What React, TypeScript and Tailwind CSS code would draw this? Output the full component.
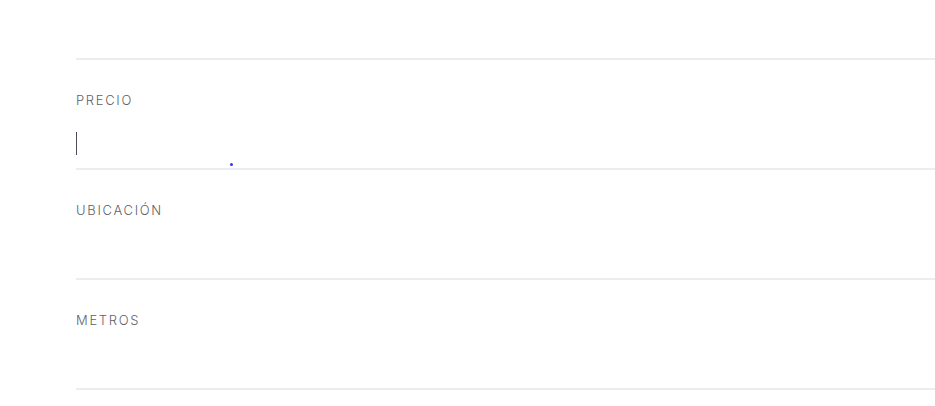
import React from "react";

const FIELDS = ["PRECIO", "UBICACIÓN", "METROS"];

export default function App() {
  return (
    <div
      className="min-h-[406px] w-full bg-white pl-[76px] pt-[58px]"
      style={{ fontFamily: "Inter, 'Noto Sans', sans-serif" }}
    >
      {FIELDS.map((label, i) => (
        <div
          key={label}
          className="relative h-[110px] border-t-2 border-[#ececf1] pt-[32px]"
        >
          <div className="text-[13px] font-light leading-4 tracking-[0.13em] text-[#5f5f6a]">
            {label}
          </div>
          {i === 0 ? (
            <>
              <div className="mt-[24px] h-[23px] w-px bg-[#4b4b55]" />
              <div className="absolute left-[154px] top-[103px] h-[3px] w-[3px] rounded-full bg-[#3535e0]" />
            </>
          ) : null}
        </div>
      ))}
      <div className="border-t-2 border-[#ececf1]" />
    </div>
  );
}
